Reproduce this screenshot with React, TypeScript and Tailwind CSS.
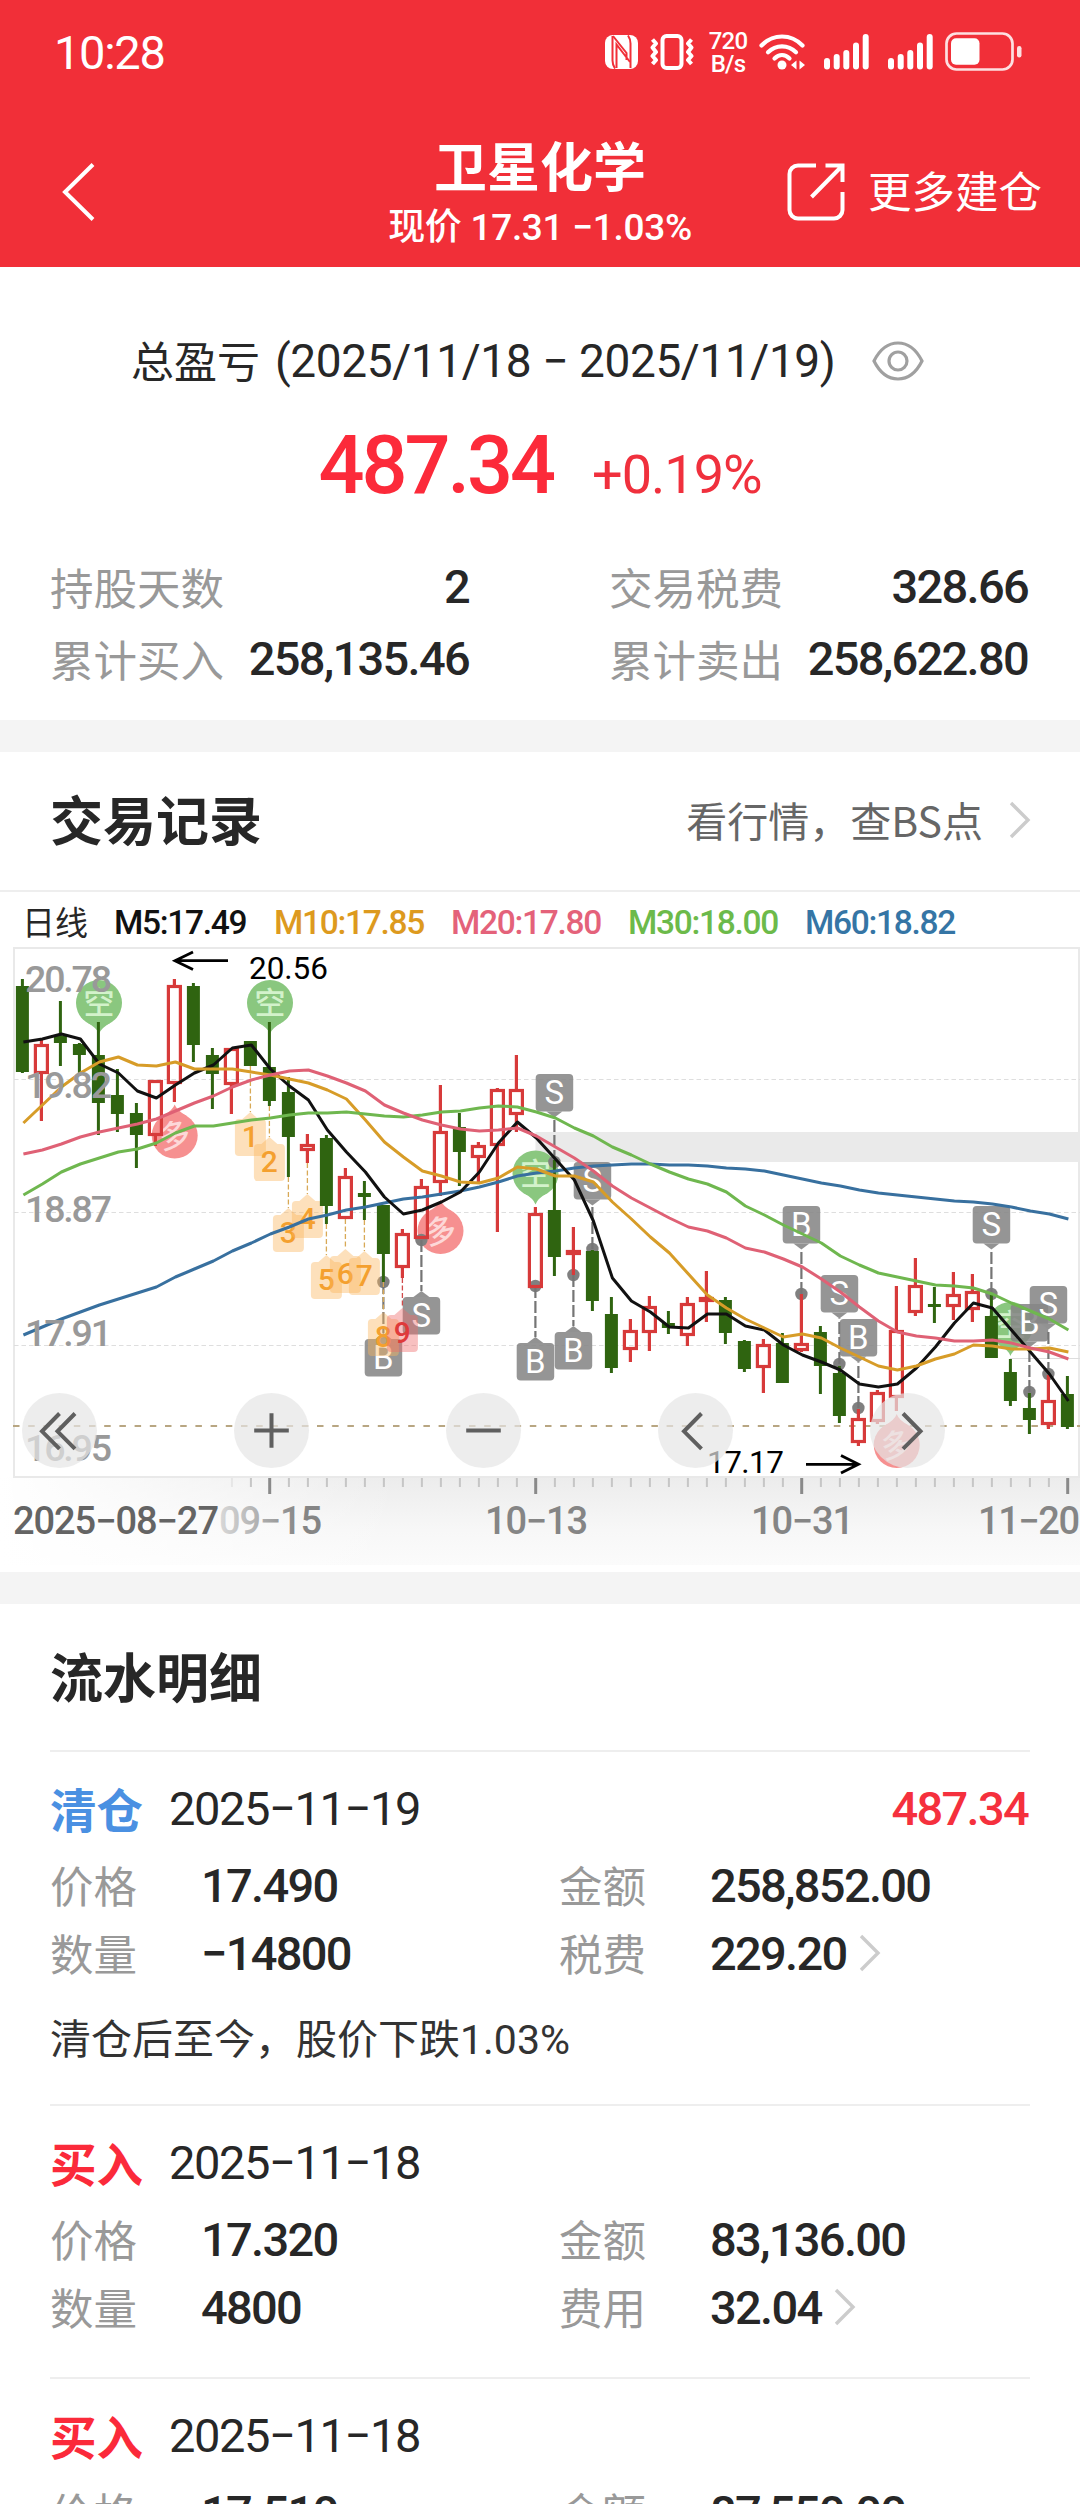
import React from 'react';

type Candle = ['r' | 'g', number, number, number, number];

// [colour, high, body top, body bottom, low]
const CANDLES: Candle[] = [
  ['g', 979, 986, 1072, 1073], ['r', 1039, 1044, 1074, 1121], ['g', 1001, 1036, 1043, 1066], ['g', 1043, 1044, 1055, 1076],
  ['g', 1022, 1055, 1103, 1135], ['g', 1069, 1095, 1114, 1132], ['g', 1103, 1113, 1135, 1168], ['r', 1080, 1080, 1136, 1146],
  ['r', 979, 985, 1084, 1102], ['g', 983, 986, 1045, 1062], ['g', 1048, 1055, 1074, 1109], ['r', 1048, 1048, 1085, 1114],
  ['g', 1041, 1041, 1066, 1066], ['g', 1022, 1067, 1101, 1106], ['g', 1077, 1092, 1137, 1177], ['r', 1134, 1144, 1151, 1163],
  ['g', 1135, 1138, 1206, 1224], ['r', 1168, 1176, 1219, 1219], ['g', 1181, 1193, 1197, 1220], ['g', 1205, 1205, 1254, 1282],
  ['r', 1229, 1233, 1268, 1278], ['r', 1179, 1186, 1239, 1239], ['r', 1085, 1131, 1183, 1196], ['g', 1113, 1127, 1152, 1186],
  ['r', 1142, 1145, 1158, 1184], ['r', 1088, 1089, 1146, 1232], ['r', 1055, 1089, 1115, 1132], ['r', 1207, 1213, 1288, 1288],
  ['g', 1160, 1210, 1257, 1276], ['r', 1227, 1250, 1255, 1275], ['g', 1250, 1251, 1301, 1311], ['g', 1297, 1314, 1368, 1373],
  ['r', 1319, 1330, 1350, 1362], ['r', 1296, 1306, 1333, 1351], ['g', 1311, 1323, 1328, 1334], ['r', 1297, 1303, 1336, 1346],
  ['r', 1271, 1297, 1302, 1322], ['g', 1297, 1300, 1333, 1344], ['g', 1340, 1341, 1369, 1372], ['r', 1339, 1344, 1368, 1393],
  ['g', 1333, 1343, 1383, 1383], ['r', 1294, 1343, 1351, 1352], ['g', 1326, 1332, 1366, 1394], ['g', 1366, 1373, 1416, 1423],
  ['r', 1409, 1418, 1443, 1446], ['r', 1390, 1392, 1422, 1424], ['r', 1286, 1330, 1398, 1411], ['r', 1258, 1285, 1313, 1316],
  ['g', 1287, 1304, 1307, 1323], ['r', 1272, 1294, 1307, 1320], ['r', 1274, 1291, 1310, 1322], ['g', 1295, 1316, 1358, 1358],
  ['g', 1359, 1372, 1401, 1406], ['g', 1393, 1408, 1420, 1434], ['r', 1375, 1400, 1425, 1429], ['g', 1376, 1394, 1427, 1429],
];

const AVERAGES = [
  {
    color: '#38709f',
    ys: [1335, 1327, 1319, 1312, 1305, 1299, 1293, 1287, 1277, 1269, 1261, 1251, 1243, 1234, 1227, 1219, 1215, 1210, 1207, 1203, 1199, 1197, 1194, 1191, 1187, 1182, 1176, 1173, 1171, 1168, 1166, 1165, 1164, 1164, 1165, 1165, 1166, 1168, 1169, 1171, 1175, 1179, 1183, 1186, 1190, 1193, 1195, 1197, 1199, 1201, 1202, 1204, 1207, 1211, 1214, 1219],
  },
  {
    color: '#111111',
    ys: [1042, 1039, 1034, 1039, 1064, 1073, 1091, 1098, 1085, 1073, 1065, 1048, 1045, 1069, 1086, 1100, 1130, 1152, 1172, 1197, 1214, 1210, 1202, 1192, 1172, 1143, 1122, 1138, 1159, 1180, 1221, 1278, 1301, 1312, 1327, 1328, 1314, 1314, 1326, 1330, 1345, 1355, 1362, 1370, 1384, 1387, 1384, 1368, 1347, 1323, 1303, 1308, 1330, 1352, 1374, 1401],
  },
  {
    color: '#d79c28',
    ys: [1123, 1105, 1087, 1073, 1062, 1057, 1065, 1066, 1062, 1069, 1069, 1069, 1072, 1075, 1079, 1083, 1090, 1099, 1120, 1142, 1157, 1171, 1176, 1182, 1183, 1178, 1167, 1169, 1176, 1176, 1182, 1202, 1219, 1237, 1253, 1274, 1295, 1308, 1319, 1328, 1337, 1334, 1338, 1348, 1357, 1366, 1370, 1366, 1359, 1354, 1345, 1346, 1349, 1349, 1348, 1352],
  },
  {
    color: '#6fb74f',
    ys: [1195, 1184, 1172, 1164, 1158, 1152, 1149, 1143, 1133, 1126, 1126, 1123, 1120, 1118, 1115, 1113, 1113, 1112, 1114, 1116, 1117, 1115, 1112, 1111, 1108, 1106, 1107, 1112, 1118, 1128, 1136, 1147, 1155, 1164, 1172, 1179, 1184, 1192, 1206, 1215, 1225, 1234, 1243, 1256, 1265, 1273, 1277, 1281, 1285, 1286, 1288, 1294, 1303, 1311, 1319, 1330],
  },
  {
    color: '#df6175',
    ys: [1154, 1150, 1144, 1137, 1132, 1128, 1124, 1119, 1111, 1103, 1096, 1087, 1080, 1075, 1071, 1070, 1076, 1083, 1091, 1105, 1113, 1120, 1125, 1129, 1131, 1130, 1128, 1136, 1147, 1158, 1171, 1186, 1198, 1208, 1218, 1227, 1231, 1238, 1248, 1252, 1259, 1267, 1279, 1292, 1307, 1321, 1332, 1336, 1338, 1341, 1341, 1340, 1343, 1348, 1352, 1359],
  },
];

// index of the day, letter, top of the badge, y of the marked price
const TRADES: [number, string, number, number][] = [
  [28, 'S', 1074, 1162], [30, 'S', 1162, 1249], [41, 'B', 1206, 1294], [43, 'S', 1275, 1364],
  [44, 'B', 1319, 1408], [51, 'S', 1206, 1294], [53, 'B', 1304, 1392], [54, 'S', 1286, 1374],
  [19, 'B', 1339, 1282], [21, 'S', 1297, 1240], [27, 'B', 1343, 1286], [29, 'B', 1332, 1275],
];

const COUNTS: [number, string, number][] = [
  [12, '1', 1119], [13, '2', 1144], [14, '3', 1215], [15, '4', 1201], [16, '5', 1262],
  [17, '6', 1256], [18, '7', 1258], [19, '8', 1319], [20, '9', 1315],
];

const SHORT_PINS = [[99, 1003], [270, 1003], [535.5, 1173.5], [1010.5, 1325]];
const LONG_PINS = [[174.7, 1135.5], [440.5, 1231], [896.7, 1445]];

const MA_LEGEND = [
  { text: 'M5:17.49', className: 'w-[160px] text-[#111111]' },
  { text: 'M10:17.85', className: 'w-[177px] text-[#dd9a1e]' },
  { text: 'M20:17.80', className: 'w-[177px] text-[#e4627a]' },
  { text: 'M30:18.00', className: 'w-[177px] text-[#6cba4a]' },
  { text: 'M60:18.82', className: 'w-[177px] text-[#3575a5]' },
];

const RECORDS = [
  { side: '清仓', date: '2025−11−19', profit: '487.34', price: '17.490', amount: '258,852.00', qty: '−14800', feeLabel: '税费', fee: '229.20', note: '清仓后至今，股价下跌1.03%' },
  { side: '买入', date: '2025−11−18', price: '17.320', amount: '83,136.00', qty: '4800', feeLabel: '费用', fee: '32.04' },
  { side: '买入', date: '2025−11−18', price: '17.510', amount: '87,550.00', qty: '5000', feeLabel: '费用', fee: '33.74' },
];

const dayX = (i: number) => 22.4 + i * 19;

const Chevron = ({ className = '' }: { className?: string }) => (
  <svg className={className} width="22" height="38" viewBox="0 0 22 38" fill="none" stroke="#cccccc" strokeWidth="3.4">
    <path d="M2 2 19 19 2 36" />
  </svg>
);

const Signal = () => (
  <svg width="45" height="36" viewBox="0 0 45 36" fill="#fff">
    <rect x="0" y="24" width="6" height="11.5" rx="3" />
    <rect x="9.7" y="20" width="6" height="15.5" rx="3" />
    <rect x="19.3" y="16" width="6" height="19.5" rx="3" />
    <rect x="29" y="8.5" width="6" height="27" rx="3" />
    <rect x="38.7" y="0" width="6" height="35.5" rx="3" />
  </svg>
);

const StatusBar = () => (
  <div className="flex h-[104px] items-center pl-[54px] pr-[57px]">
    <div className="font-[Roboto,sans-serif] text-[47px] leading-none tracking-[-1.300px]">10:28</div>
    <div className="ml-auto flex items-center">
      <svg width="33" height="34" viewBox="0 0 33 34">
        <rect width="33" height="34" rx="8" fill="#fff" />
        <g fill="none" stroke="#f12f38" strokeWidth="2">
          <path d="M7.5 1v24.5c0 3 .8 5.500 2.500 8" />
          <path d="M25.500 33V8.500c0-3-.8-5.500-2.500-8" />
          <path d="M11.500 33V9.500l13.500 17.500M8 1l13.500 17V25" />
        </g>
      </svg>
      <svg className="ml-3" width="44" height="36" viewBox="0 0 44 36" fill="none" stroke="#fff">
        <rect x="12.500" y="2" width="19" height="32" rx="4" strokeWidth="4" />
        <path d="M2.500 5.500l3.500 4-3.500 4 3.500 4.500-3.500 4 3.500 4-3.500 4M41.500 5.500l-3.500 4 3.500 4-3.500 4.500 3.500 4-3.500 4 3.500 4" strokeWidth="4" strokeLinejoin="round" />
      </svg>
      <div className="ml-[14px] w-10 pt-[2px] text-center font-[Roboto,sans-serif] text-[24px] font-medium leading-[23px] tracking-[-0.8px]">
        <div>720</div>
        <div>B/s</div>
      </div>
      <svg className="ml-[11px]" width="47" height="36" viewBox="0 0 47 36" fill="none" stroke="#fff" strokeWidth="4.200" strokeLinecap="round">
        <path d="M2.500 11.500C14-.5 32-.5 43.500 11.500" />
        <path d="M9 18.300c8-8 20-8 28 0" />
        <path d="M15.500 24.500c4.500-4.500 10.500-4.500 15 0" />
        <circle cx="23" cy="31" r="4.500" fill="#fff" stroke="none" />
        <path d="M32 31l5.500-4.500v9zM46 31l-5.500-4.500v9z" fill="#fff" stroke="none" />
      </svg>
      <div className="ml-[18px]"><Signal /></div>
      <div className="ml-[19px]"><Signal /></div>
      <svg className="ml-3" width="78" height="40" viewBox="0 0 78 40">
        <rect x="1.500" y="1.500" width="66" height="36" rx="10" fill="none" stroke="#fff" strokeOpacity=".85" strokeWidth="2.700" />
        <rect x="6" y="6.300" width="28.500" height="26.500" rx="5" fill="#fff" />
        <rect x="72" y="14" width="4.500" height="11.500" rx="2.200" fill="#fff" fillOpacity=".85" />
      </svg>
    </div>
  </div>
);

const Header = () => (
  <header className="h-[267px] bg-[#f12f38] text-white">
    <StatusBar />
    <div className="grid h-[163px] grid-cols-[1fr_auto_1fr] items-center pl-[61px] pr-[38px] pt-3">
      <svg width="36" height="60" viewBox="0 0 36 60" fill="none" stroke="#fff" strokeWidth="4">
        <path d="M32 2.500 4 30l28 27.500" />
      </svg>
      <div className="-ml-[23px] pt-[10px] text-center">
        <h1 className="text-[53px] font-bold leading-[56px]">卫星化学</h1>
        <div className="pt-[6px] font-[Roboto,'Noto_Sans_CJK_SC',sans-serif] text-[37px] font-medium leading-[60px] tracking-[-0.300px]">现价 17.31 −1.03%</div>
      </div>
      <div className="flex items-center justify-end gap-[23px]">
        <svg width="58" height="58" viewBox="0 0 58 58" fill="none" stroke="#fff" strokeWidth="4">
          <path d="M29 2.500H11a8.500 8.500 0 0 0-8.500 8.500v36a8.500 8.500 0 0 0 8.500 8.500h36a8.500 8.500 0 0 0 8.500-8.500V29" />
          <path d="M38.500 2.500h17V19M55.500 2.500 24.500 34" />
        </svg>
        <span className="pb-[3px] text-[43.500px] leading-none">更多建仓</span>
      </div>
    </div>
  </header>
);

const Stat = ({ label, value }: { label: string; value: string }) => (
  <div className="flex h-[72px] items-center justify-between">
    <span className="text-[43.5px] leading-none text-[#999999]">{label}</span>
    <span className="mr-px pb-[2px] font-[Roboto,sans-serif] text-[47px] font-medium leading-none tracking-[-1.700px]">{value}</span>
  </div>
);

const Summary = () => (
  <section className="h-[453px] pt-[59px]">
    <div className="flex h-[70px] items-center pl-[131px]">
      <span className="pb-[3px] text-[43px] leading-none">总盈亏</span>
      <span className="ml-[15px] font-[Roboto,sans-serif] text-[46px] leading-none tracking-[-0.4px]">(2025/11/18 − 2025/11/19)</span>
      <svg className="ml-[37px]" width="52" height="40" viewBox="0 0 52 40" fill="none" stroke="#a0a0a0" strokeWidth="3.200">
        <path d="M2 20C8 8 16 2 26 2s18 6 24 18c-6 12-14 18-24 18S8 32 2 20Z" />
        <circle cx="26" cy="20" r="9" />
      </svg>
    </div>
    <div className="flex h-[110px] items-baseline justify-center pt-[29px] font-[Roboto,sans-serif] font-medium leading-none">
      <span className="text-[81px] tracking-[-3px] text-[#fc2a3a]">487.34</span>
      <span className="ml-[39px] text-[54px] font-normal tracking-[-1px] text-[#f0303d]">+0.19%</span>
    </div>
    <div className="grid grid-cols-2 gap-x-[139px] pl-[50px] pr-[51px] pt-[45px]">
      <Stat label="持股天数" value="2" />
      <Stat label="交易税费" value="328.66" />
      <Stat label="累计买入" value="258,135.46" />
      <Stat label="累计卖出" value="258,622.80" />
    </div>
  </section>
);

const Pin = ({ x, y, text, up, fill, ink }: { x: number; y: number; text: string; up?: boolean; fill: string; ink: string }) => (
  <g>
    <circle cx={x} cy={y} r="23" fill={fill} />
    <path d={up ? `M${x - 12} ${y - 19.600}Q${x - 2} ${y - 25} ${x} ${y - 31}Q${x + 2} ${y - 25} ${x + 12} ${y - 19.600}Z` : `M${x - 12} ${y + 19.600}Q${x - 2} ${y + 25} ${x} ${y + 31}Q${x + 2} ${y + 25} ${x + 12} ${y + 19.600}Z`} fill={fill} />
    <text x={x} y={y + 11} textAnchor="middle" fontSize="31" fontWeight="500" fill={ink} transform={up ? `rotate(-12 ${x} ${y})` : undefined}>{text}</text>
  </g>
);

const TradeBadge = ({ day, letter, top, price }: { day: number; letter: string; top: number; price: number }) => {
  const x = dayX(day);
  const below = top > price;
  const edge = below ? top : top + 37.5;
  const tip = below ? top - 6 : top + 43.5;
  return (
    <g>
      <circle cx={x} cy={price} r="6.200" fill="#808080" />
      <line x1={x} x2={x} y1={price} y2={tip} stroke="#757575" strokeWidth="2.200" strokeDasharray="12 3" />
      <path d={`M${x - 8} ${edge}L${x} ${tip}L${x + 8} ${edge}Z`} fill="#929292" />
      <rect x={x - 18.7} y={top} width="37.500" height="37.500" rx="4" fill="#868686" fillOpacity=".88" />
      <text x={x} y={top + 30} textAnchor="middle" fontSize="33" fill="#fff">{letter}</text>
    </g>
  );
};

const KLine = () => (
  <svg className="block font-[Roboto,'Noto_Sans_CJK_SC',sans-serif]" width="1080" height="625" viewBox="0 940 1080 625">
    <defs>
      <linearGradient id="axisFade" x1="0" x2="0" y1="0" y2="1">
        <stop offset="0" stopColor="#ececec" />
        <stop offset=".6" stopColor="#f7f7f7" />
        <stop offset="1" stopColor="#fbfbfb" />
      </linearGradient>
      <linearGradient id="leftFade" x1="0" x2="1" y1="0" y2="0">
        <stop offset="0" stopColor="#fff" />
        <stop offset="1" stopColor="#fff" stopOpacity="0" />
      </linearGradient>
      <linearGradient id="dateFade" gradientUnits="userSpaceOnUse" x1="215" x2="300" y1="0" y2="0">
        <stop offset="0" stopColor="#dddddd" />
        <stop offset="1" stopColor="#858585" />
      </linearGradient>
    </defs>

    <rect x="0" y="1477" width="1080" height="88" fill="url(#axisFade)" />
    <rect x="0" y="1477" width="400" height="88" fill="url(#leftFade)" />
    <rect x="14" y="948" width="1065" height="529" fill="#fff" stroke="#e9e9e9" strokeWidth="2" />
    {[1079.5, 1212.5, 1345.5].map(y => (
      <line key={y} x1="14" x2="1080" y1={y} y2={y} stroke="#dedede" strokeWidth="1.200" strokeDasharray="4.500 3" />
    ))}
    <line x1="1010" x2="1080" y1="1358.500" y2="1358.500" stroke="#dddddd" />
    <rect x="535.500" y="1132" width="545" height="30" fill="#eaeaea" />
    <line x1="13" x2="1080" y1="1426" y2="1426" stroke="#b8a682" strokeWidth="2" strokeDasharray="6.500 8.700" />

    {SHORT_PINS.map(([x, y]) => <Pin key={`${x}-${y}`} x={x} y={y} text="空" fill="#8ac77f" ink="#d3f2cb" />)}
    {LONG_PINS.map(([x, y]) => <Pin key={`${x}-${y}`} x={x} y={y} text="多" up fill="#f69090" ink="#fdd8d8" />)}
    {TRADES.map(([day, letter, top, price]) => (
      <TradeBadge key={`${day}${letter}`} day={day} letter={letter} top={top} price={price} />
    ))}

    {COUNTS.map(([day, label, top]) => {
      const x = dayX(day);
      const hot = label === '9';
      return (
        <g key={label}>
          <line x1={x} x2={x} y1={CANDLES[day][4]} y2={top - 7} stroke={hot ? '#d04a4a' : '#d8a956'} strokeWidth="1.300" strokeDasharray="5 2.500" />
          <path d={`M${x - 11.500} ${top}H${x - 8}L${x} ${top - 7}L${x + 8} ${top}H${x + 11.500}a4 4 0 0 1 4 4v29a4 4 0 0 1 -4 4H${x - 11.500}a4 4 0 0 1 -4 -4v-29a4 4 0 0 1 4 -4Z`} fill={hot ? '#ef6a6a' : '#fbb55c'} fillOpacity=".42" />
          <text x={x} y={top + 28} textAnchor="middle" fontSize="30" fontWeight="500" fill={hot ? '#df3a3a' : '#f4a02f'}>{label}</text>
        </g>
      );
    })}

    {CANDLES.map(([tone, high, top, bottom, low], i) => {
      const x = dayX(i);
      if (tone === 'g') {
        return (
          <g key={i} fill="#2f6410">
            <rect x={x - 1.500} y={high} width="3" height={low - high} />
            <rect x={x - 6.500} y={top} width="13" height={bottom - top} />
          </g>
        );
      }
      return (
        <g key={i} fill="none" stroke="#d73a3a" strokeWidth="3.200">
          <path d={`M${x} ${high}V${top}M${x} ${bottom}V${low}`} />
          <rect x={x - 6} y={top + 1.500} width="12" height={Math.max(bottom - top - 3, 1)} />
        </g>
      );
    })}

    {AVERAGES.map(({ color, ys }) => (
      <polyline key={color} points={ys.map((y, i) => `${dayX(i) + 1},${y}`).join(' ')} fill="none" stroke={color} strokeWidth="3" strokeLinejoin="round" />
    ))}

    <g fontSize="37.500" fontWeight="500" fill="#999999">
      <text x="25" y="992" textLength="87">20.78</text>
      <text x="25" y="1098" textLength="87">19.82</text>
      <text x="25" y="1222" textLength="87">18.87</text>
      <text x="25" y="1346" textLength="87">17.91</text>
      <text x="25" y="1460.500" textLength="87">16.95</text>
    </g>

    <g fontSize="31.500">
      <text x="249" y="979" textLength="79">20.56</text>
      <text x="707" y="1473" textLength="77">17.17</text>
    </g>
    <g fill="none" stroke="#000" strokeWidth="2.800">
      <path d="M228 960.700H175M193 952l-18 8.700 18 8.700" />
      <path d="M806 1464.300h52M841 1455.500l17.500 8.800-17.500 8.800" />
    </g>

    {CANDLES.map((_, i) => {
      if (i < 11) return null;
      const major = (i - 13) % 14 === 0;
      return <rect key={i} x={dayX(i) - (major ? 1.200 : 0.500)} y="1478" width={major ? 3 : 2} height={major ? 16 : 9} fill={major ? '#8a8a8a' : i < 12 ? '#e6e6e6' : '#c6c6c6'} />;
    })}
    <g fontSize="38" fontWeight="500" fill="#858585">
      <text x="13" y="1534" textLength="206" fill="#646464">2025−08−27</text>
      <text x="219" y="1534" textLength="103" fill="url(#dateFade)">09−15</text>
      <text x="485" y="1534" textLength="103">10−13</text>
      <text x="751" y="1534" textLength="103">10−31</text>
      <text x="978" y="1534" textLength="102">11−20</text>
    </g>
  </svg>
);

const CONTROLS = [
  { name: '最左', d: 'M37.500 20.500 20 38.300l17.500 17.500M53 20.500 35.500 38.300 53 55.800' },
  { name: '放大', d: 'M37.500 20.200v34.600M20.200 37.500h34.600' },
  { name: '缩小', d: 'M20.200 37.500h34.600' },
  { name: '左移', d: 'M43.500 20.500 26 38.300l17.500 17.500' },
  { name: '右移', d: 'M33 20.500 50.500 38.300 33 55.800' },
];

const TradeChart = () => (
  <section className="h-[820px] bg-white">
    <div className="flex h-[140px] items-center border-b-2 border-[#eeeeee] pl-[50px] pr-[49px]">
      <h2 className="pb-[6px] text-[53px] font-bold leading-none">交易记录</h2>
      <span className="ml-auto pb-[3px] font-['Noto_Sans_CJK_SC',sans-serif] text-[41px] leading-none text-[#666666]">看行情，查BS点</span>
      <Chevron className="mb-[3px] ml-[26px]" />
    </div>
    <div className="flex h-[48px] items-center pl-[22px] pt-[14px] font-[Roboto,sans-serif] text-[33.500px] font-medium leading-none tracking-[-1.300px]">
      <span className="w-[92px] pb-[4px] font-['Noto_Sans_CJK_SC',sans-serif] text-[33px] font-normal tracking-normal">日线</span>
      {MA_LEGEND.map(item => (
        <span key={item.text} className={item.className}>{item.text}</span>
      ))}
    </div>
    <div className="relative">
      <KLine />
      <div className="absolute left-[22px] top-[453px] flex gap-[137px]">
        {CONTROLS.map(({ name, d }) => (
          <button key={name} aria-label={name} className="size-[75px] rounded-full bg-[#e5e5e5]/70">
            <svg width="75" height="75" viewBox="0 0 75 75" fill="none" stroke="#5f5f5f" strokeWidth="4">
              <path d={d} />
            </svg>
          </button>
        ))}
      </div>
    </div>
  </section>
);

const Field = ({ label, value, chevron }: { label: string; value: string; chevron?: boolean }) => (
  <div className="flex h-[68px] items-center">
    <span className="w-[151px] text-[43.500px] leading-none text-[#999999]">{label}</span>
    <span className="font-[Roboto,sans-serif] text-[47px] font-medium leading-none tracking-[-1.700px]">{value}</span>
    {chevron && <Chevron className="ml-[13px]" />}
  </div>
);

const Records = () => (
  <section className="bg-white px-[50px]">
    <h2 className="h-[146px] pt-[41px] text-[53px] font-bold leading-[60px]">流水明细</h2>
    {RECORDS.map((r, i) => (
      <article key={i} className={`border-t-2 border-[#eeeeee] pt-[19px] ${r.note ? 'h-[354px]' : 'h-[273px]'}`}>
        <div className="flex h-[74px] items-center">
          <span className={`w-[119px] text-[46.500px] font-bold leading-none ${r.side === '清仓' ? 'text-[#4a90e2]' : 'text-[#fb2a3a]'}`}>{r.side}</span>
          <span className="font-[Roboto,sans-serif] text-[47px] leading-none tracking-[-1.400px]">{r.date}</span>
          {r.profit && <span className="ml-auto mr-[2px] font-[Roboto,sans-serif] text-[47px] font-medium leading-none tracking-[-1.700px] text-[#f5303d]">{r.profit}</span>}
        </div>
        <div className="grid grid-cols-[509px_1fr] pt-[6px]">
          <Field label="价格" value={r.price} />
          <Field label="金额" value={r.amount} />
          <Field label="数量" value={r.qty} />
          <Field label={r.feeLabel} value={r.fee} chevron />
        </div>
        {r.note && <p className="pt-[23px] font-[Roboto,'Noto_Sans_CJK_SC',sans-serif] text-[41px] leading-[60px] text-[#333333]">{r.note}</p>}
      </article>
    ))}
  </section>
);

export default function App() {
  return (
    <div className="h-[2504px] w-[1080px] overflow-hidden bg-white font-['Noto_Sans_CJK_SC',sans-serif] text-[#272727]">
      <Header />
      <Summary />
      <div className="h-8 bg-[#f4f4f4]" />
      <TradeChart />
      <div className="h-8 bg-[#f4f4f4]" />
      <Records />
    </div>
  );
}
